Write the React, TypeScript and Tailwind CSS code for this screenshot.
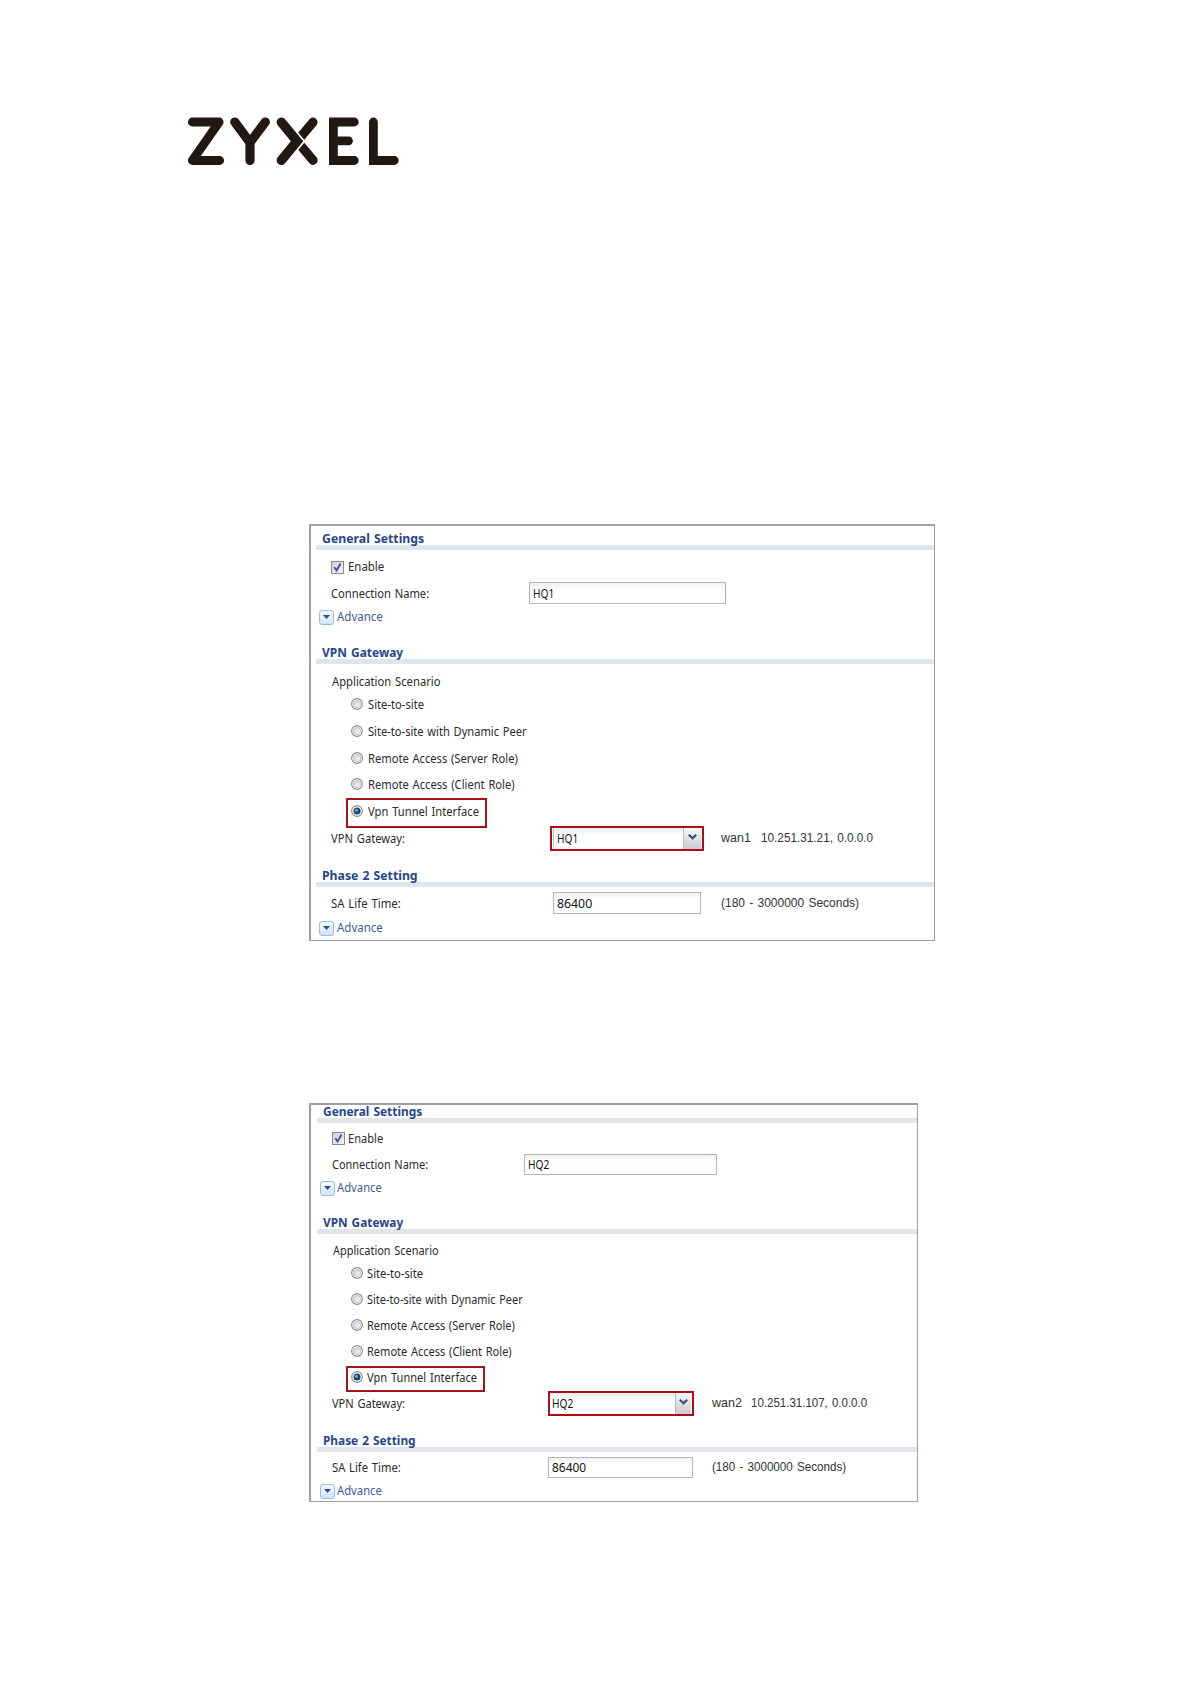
import { useLayoutEffect, useRef, type ReactNode } from "react";

/** Text condensed or widened horizontally to an exact width. */
function Fit({ w, children, className = "" }: { w: number; children: string; className?: string }) {
  const ref = useRef<HTMLSpanElement>(null);
  useLayoutEffect(() => {
    const el = ref.current;
    if (!el) return;
    el.style.transform = `scaleX(${w / el.offsetWidth})`;
  }, [w, children]);
  return (
    <span className={`inline-flex shrink-0 whitespace-pre ${className}`} style={{ width: w }}>
      <span ref={ref} className="shrink-0 origin-left [word-spacing:1px]">
        {children}
      </span>
    </span>
  );
}

function Logo() {
  return (
    <svg width="250" height="80" viewBox="0 0 250 80" fill="none" stroke="#211815" strokeWidth="8.8" strokeLinecap="round" role="img" aria-label="ZYXEL">
      <path d="M22.3 22H49.2L22.3 60.5H49.7" strokeLinejoin="round" />
      <path d="M64.8 22L80 42.5L95.3 22M80 42.5V60.5" strokeWidth="9.2" />
      <path d="M143 22.2L127 41.2L143 60.3" strokeWidth="9.2" />
      <path d="M111.4 22.2L127 41.2L111.4 60.3" stroke="#fff" strokeWidth="13" strokeLinecap="butt" />
      <path d="M111.4 22.2L127 41.2L111.4 60.3" strokeWidth="9.6" />
      <path d="M184.3 22H163.4V60.5H184.3M163.4 40.8H178.5" />
      <path d="M203.4 22V60.5H224.3" />
    </svg>
  );
}

function Heading({ w, className, children }: { w: number; className: string; children: string }) {
  return (
    <div className={className}>
      <div className="h-[13px] pl-[6px] text-[13px] font-bold leading-[13px] text-[#27468a]">
        <Fit w={w}>{children}</Fit>
      </div>
      <div className="h-[5px] bg-[#e1e4e9]" />
    </div>
  );
}

function Row({ className, children }: { className: string; children: ReactNode }) {
  return <div className={`relative flex h-5 items-center ${className}`}>{children}</div>;
}

function Check() {
  return (
    <span className="flex size-[13px] shrink-0 items-center justify-center border border-[#8a8b90] bg-linear-to-br from-[#cfd2da] to-[#f4f4f8]">
      <svg width="11" height="11" viewBox="0 0 11 11" fill="none" stroke="#4c4f96" strokeWidth="1.9">
        <path d="M2.3 5.2L4.6 8.4L8.6 1.6" />
      </svg>
    </span>
  );
}

function Radio({ on = false }: { on?: boolean }) {
  return (
    <svg className="shrink-0" width="12" height="12" viewBox="0 0 12 12">
      <circle cx="6" cy="6" r="5.4" fill="#f3f3f3" stroke="#8b8d8f" strokeWidth="1.1" />
      {on ? (
        <>
          <circle cx="6" cy="6" r="3.5" fill="#1c4868" />
          <circle cx="5.4" cy="5.2" r="1.5" fill="#5fb0dc" />
        </>
      ) : (
        <>
          <circle cx="6" cy="6" r="3.7" fill="#d9d9d9" stroke="#c0c0c0" strokeWidth=".7" />
          <circle cx="6.8" cy="6.8" r="2.3" fill="#e9e9e9" />
        </>
      )}
    </svg>
  );
}

function Advance({ w, gap, className }: { w: number; gap: string; className: string }) {
  return (
    <Row className={className}>
      <span className="flex size-[15px] shrink-0 items-center justify-center rounded-[3px] border border-[#9dbbe4] bg-linear-to-b from-[#f4faff] to-[#cfe4fb]">
        <svg width="7" height="4" viewBox="0 0 7 4">
          <path d="M0 0H7L3.5 4Z" fill="#2b4c96" />
        </svg>
      </span>
      <span className={`mb-[2px] flex text-[#3f5a98] ${gap}`}>
        <Fit w={w}>Advance</Fit>
      </span>
    </Row>
  );
}

function Field({ w, className, children }: { w: number; className: string; children: string }) {
  return (
    <span className={`flex shrink-0 items-center border border-[#b3b5ba] bg-linear-to-b from-[#eff1f3] to-white to-35% pl-[3px] text-[#111] ${className}`}>
      <Fit w={w}>{children}</Fit>
    </span>
  );
}

function Select({ className, inner, button, children }: { className: string; inner: string; button: string; children: string }) {
  return (
    <span className={`flex shrink-0 border-2 border-[#b00d14] bg-white ${className}`}>
      <span className={`flex flex-1 items-center bg-linear-to-b from-[#eceef0] to-white to-35% text-[#111] ${inner}`}>
        <Fit w={21} className="mb-px">{children}</Fit>
      </span>
      <span className={`mr-px flex items-center justify-center border-l border-[#b9bcc2] bg-linear-to-b from-[#f7f8f9] to-[#c9ccd1] ${button}`}>
        <svg className="-mt-[3px]" width="9" height="6" viewBox="0 0 9 6" fill="none" stroke="#34497f" strokeWidth="2.2">
          <path d="M.8 .8L4.5 4.2L8.2 .8" />
        </svg>
      </span>
    </span>
  );
}

const options = ["Site-to-site", "Site-to-site with Dynamic Peer", "Remote Access (Server Role)", "Remote Access (Client Role)", "Vpn Tunnel Interface"];

const frame = "border-t-2 border-r border-b border-l-2 border-[#a0a0a0] text-[13px] leading-5 text-[#2b2b2b] font-['Noto_Sans',sans-serif]";
const arial = "font-['Liberation_Sans',sans-serif] text-[12.5px] text-[#333]";

function PanelHQ1() {
  const widths = [56, 159, 150, 147, 111];
  const gaps = ["mt-[2px]", "mt-[7px]", "mt-[7px]", "mt-[6px]", "mt-[7px]"];
  return (
    <section className={`mt-[344px] ml-[309px] h-[417px] w-[626px] ${frame}`}>
      <Heading w={102} className="ml-[5px] pt-[6px]">General Settings</Heading>
      <Row className="mt-[7px] gap-[4px] pl-[20px]">
        <Check />
        <Fit w={36} className="mb-[2px]">Enable</Fit>
      </Row>
      <Row className="mt-[6px] pl-[20px]">
        <span className="flex w-[198px] shrink-0"><Fit w={98}>Connection Name:</Fit></span>
        <Field w={21} className="h-[22px] w-[197px]">HQ1</Field>
      </Row>
      <Advance w={46} gap="ml-[3px]" className="mt-[4px] pl-[8px]" />
      <Heading w={81} className="ml-[5px] pt-[19px]">VPN Gateway</Heading>
      <Row className="mt-[8px] pl-[21px]"><Fit w={109} className="mb-[2px]">Application Scenario</Fit></Row>
      {options.map((o, i) => (
        <Row key={o} className={`gap-[5px] pl-[40px] ${gaps[i]}`}>
          {i === 4 && <span className="absolute -top-[3px] left-[35px] h-[30px] w-[141px] border-2 border-[#a8131a]" />}
          <Radio on={i === 4} />
          <Fit w={widths[i]}>{o}</Fit>
        </Row>
      ))}
      <Row className="mt-[7px] pl-[20px]">
        <span className="flex w-[219px] shrink-0"><Fit w={74}>VPN Gateway:</Fit></span>
        <Select className="mt-[1px] h-[25px] w-[154px]" inner="ml-px border-l border-[#c3c5ca] pl-[3px]" button="w-[18px]">HQ1</Select>
        <span className={`ml-[17px] flex gap-[10px] ${arial}`}>
          <Fit w={30}>wan1</Fit>
          <Fit w={112}>10.251.31.21, 0.0.0.0</Fit>
        </span>
      </Row>
      <Heading w={96} className="ml-[5px] pt-[21px]">Phase 2 Setting</Heading>
      <Row className="mt-[6px] pl-[20px]">
        <span className="flex w-[222px] shrink-0"><Fit w={70}>SA Life Time:</Fit></span>
        <Field w={35} className="h-[22px] w-[148px]">86400</Field>
        <span className={`ml-[20px] flex ${arial}`}><Fit w={138}>(180 - 3000000 Seconds)</Fit></span>
      </Row>
      <Advance w={46} gap="ml-[3px]" className="mt-[5px] pl-[8px]" />
    </section>
  );
}

function PanelHQ2() {
  const widths = [56, 156, 148, 145, 110];
  const gaps = ["mt-[3px]", "mt-[6px]", "mt-[6px]", "mt-[6px]", "mt-[6px]"];
  return (
    <section className={`mt-[162px] ml-[309px] h-[399px] w-[609px] ${frame}`}>
      <Heading w={99} className="ml-[6px]">General Settings</Heading>
      <Row className="mt-[5px] gap-[3px] pl-[21px]">
        <Check />
        <Fit w={35}>Enable</Fit>
      </Row>
      <Row className="mt-[6px] pl-[21px]">
        <span className="flex w-[192px] shrink-0"><Fit w={96}>Connection Name:</Fit></span>
        <Field w={21} className="h-[21px] w-[193px]">HQ2</Field>
      </Row>
      <Advance w={45} gap="ml-[2px]" className="mt-[4px] pl-[9px]" />
      <Heading w={80} className="ml-[6px] pt-[18px]">VPN Gateway</Heading>
      <Row className="mt-[6px] pl-[22px]"><Fit w={106}>Application Scenario</Fit></Row>
      {options.map((o, i) => (
        <Row key={o} className={`gap-[4px] pl-[40px] ${gaps[i]}`}>
          {i === 4 && <span className="absolute -top-px left-[35px] h-[26px] w-[139px] border-2 border-[#a8131a]" />}
          <Radio on={i === 4} />
          <Fit w={widths[i]}>{o}</Fit>
        </Row>
      ))}
      <Row className="mt-[6px] pl-[21px]">
        <span className="flex w-[216px] shrink-0"><Fit w={73}>VPN Gateway:</Fit></span>
        <Select className="h-[25px] w-[146px]" inner="pl-[2px]" button="w-[16px]">HQ2</Select>
        <span className={`ml-[18px] flex gap-[9px] ${arial}`}>
          <Fit w={30}>wan2</Fit>
          <Fit w={116}>10.251.31.107, 0.0.0.0</Fit>
        </span>
      </Row>
      <Heading w={93} className="ml-[6px] pt-[21px]">Phase 2 Setting</Heading>
      <Row className="mt-[5px] pl-[21px]">
        <span className="flex w-[216px] shrink-0"><Fit w={69}>SA Life Time:</Fit></span>
        <Field w={34} className="h-[21px] w-[145px]">86400</Field>
        <span className={`ml-[19px] flex ${arial}`}><Fit w={134}>(180 - 3000000 Seconds)</Fit></span>
      </Row>
      <Advance w={45} gap="ml-[2px]" className="mt-[4px] pl-[9px]" />
    </section>
  );
}

export default function App() {
  return (
    <main className="flex h-[1684px] w-[1191px] flex-col bg-white">
      <header className="mt-[100px] ml-[170px] h-[80px]">
        <Logo />
      </header>
      <PanelHQ1 />
      <PanelHQ2 />
    </main>
  );
}
